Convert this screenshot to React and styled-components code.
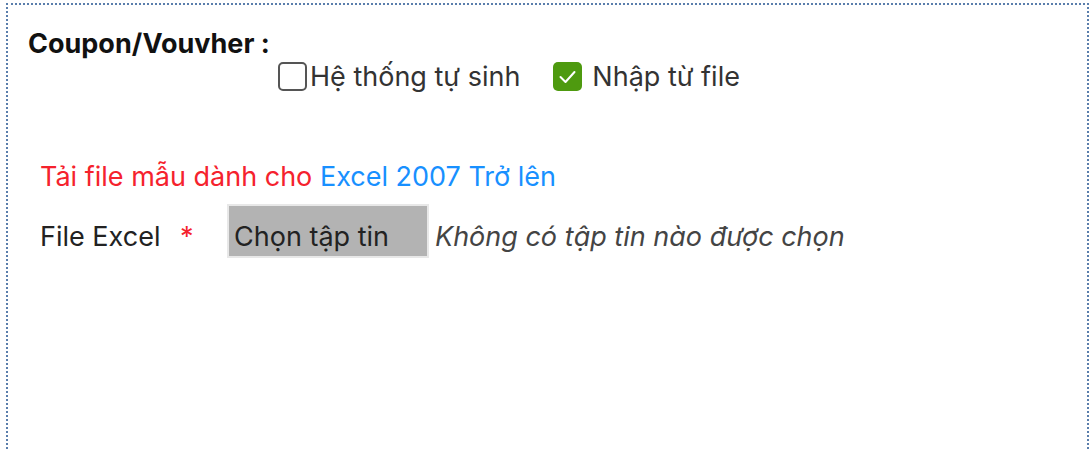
import React, { useState } from "react";
import styled, { createGlobalStyle } from "styled-components";

const GlobalStyle = createGlobalStyle`
  body {
    margin: 0;
    background: #fff;
    font-family: Inter, "Noto Sans", "Liberation Sans", sans-serif;
    color: #222;
  }
`;

export default function App() {
  const [auto, setAuto] = useState(false);
  const [fromFile, setFromFile] = useState(true);

  return (
    <>
      <GlobalStyle />
      <Panel>
        <Title>Coupon/Vouvher :</Title>
        <OptionRow>
          <Option onClick={() => setAuto(!auto)}>
            <Box checked={auto}>{auto && <Tick />}</Box>
            Hệ thống tự sinh
          </Option>
          <Option onClick={() => setFromFile(!fromFile)}>
            <Box checked={fromFile}>{fromFile && <Tick />}</Box>
            Nhập từ file
          </Option>
        </OptionRow>
        <TemplateLine>
          <Red>Tải file mẫu dành cho </Red>
          <Link href="#">Excel 2007 Trở lên</Link>
        </TemplateLine>
        <FileRow>
          <FieldLabel>
            File Excel <Star>*</Star>
          </FieldLabel>
          <FileButton>Chọn tập tin</FileButton>
          <NoFile>Không có tập tin nào được chọn</NoFile>
        </FileRow>
      </Panel>
    </>
  );
}

function Tick() {
  return (
    <svg width="29" height="29" viewBox="0 0 29 29">
      <path
        d="M7.5 15 L12.5 20 L21.5 10"
        fill="none"
        stroke="#fff"
        strokeWidth="2"
        strokeLinecap="round"
        strokeLinejoin="round"
      />
    </svg>
  );
}

const Panel = styled.div`
  margin: 3px 2px 0 6px;
  min-height: 470px;
  border: 2px dotted #5a7eac;
  border-bottom: none;
  padding: 23px 20px 0 20px;
  box-sizing: border-box;
  font-size: 27px;
`;

const Title = styled.div`
  font-weight: 700;
  color: #111;
  line-height: 32px;
`;

const OptionRow = styled.div`
  display: flex;
  gap: 33px;
  padding-left: 250px;
  height: 32px;
  align-items: center;
`;

const Option = styled.label`
  display: flex;
  align-items: center;
  color: #333;
  cursor: pointer;
`;

const Box = styled.span`
  width: 29px;
  height: 29px;
  box-sizing: border-box;
  border-radius: 5px;
  display: flex;
  align-items: center;
  justify-content: center;
  border: ${(p) => (p.checked ? "none" : "2px solid #555")};
  background: ${(p) => (p.checked ? "#4e9a0f" : "#fff")};
  margin-right: ${(p) => (p.checked ? "10px" : "3px")};
`;

const TemplateLine = styled.div`
  margin-top: 69px;
  padding-left: 12px;
  line-height: 32px;
`;

const Red = styled.span`
  color: #f5222d;
`;

const Link = styled.a`
  color: #1890ff;
  text-decoration: none;
`;

const FileRow = styled.div`
  display: flex;
  align-items: flex-end;
  margin-top: 11px;
  padding-left: 12px;
  line-height: 32px;
`;

const FieldLabel = styled.span`
  color: #222;
  width: 187px;
  flex-shrink: 0;
  margin-bottom: 5px;
`;

const Star = styled.span`
  color: #f5222d;
  margin-left: 12px;
`;

const FileButton = styled.span`
  background: #b3b3b3;
  border: 2px solid #e8e8e8;
  padding: 0 38px 3px 5px;
  height: 54px;
  display: flex;
  align-items: flex-end;
  box-sizing: border-box;
  color: #222;
`;

const NoFile = styled.span`
  font-style: italic;
  color: #444;
  margin-left: 6px;
  margin-bottom: 5px;
`;
